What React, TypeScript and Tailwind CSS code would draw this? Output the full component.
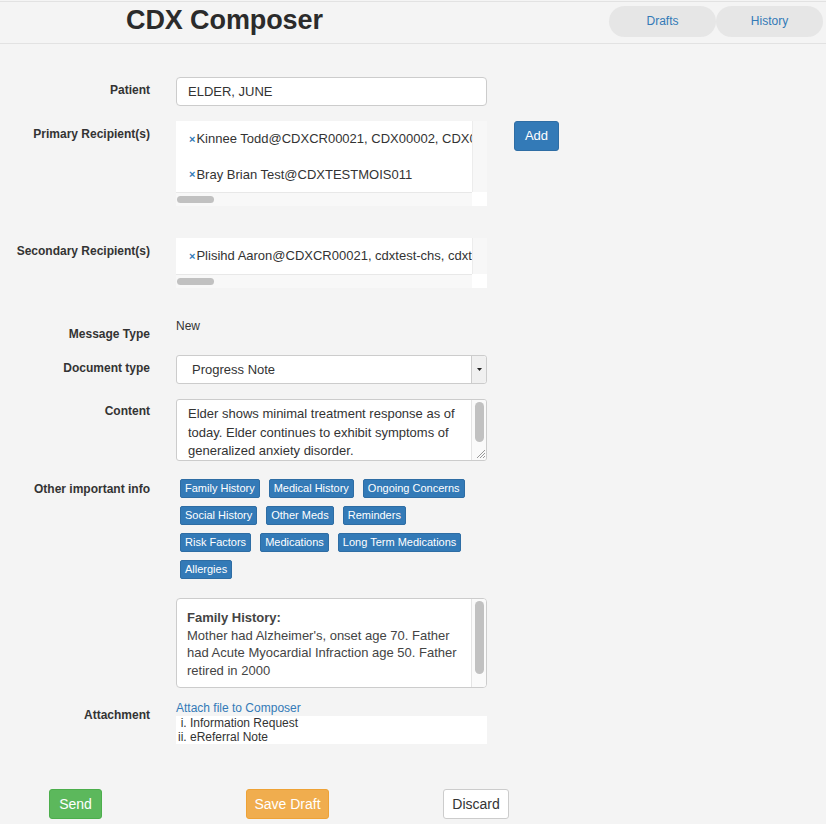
import React from 'react'

const TAG_ROWS = [
  ['Family History', 'Medical History', 'Ongoing Concerns'],
  ['Social History', 'Other Meds', 'Reminders'],
  ['Risk Factors', 'Medications', 'Long Term Medications'],
  ['Allergies'],
]

function Label({ children, pt = 'pt-[6px]' }: { children: React.ReactNode; pt?: string }) {
  return (
    <div className={`w-[150px] shrink-0 text-right text-[12px] leading-[14px] font-bold text-[#333] ${pt}`}>
      {children}
    </div>
  )
}

function Recipient({ text, h }: { text: string; h: string }) {
  return (
    <div className={`flex items-center pl-[13px] whitespace-nowrap text-[13px] text-[#333] ${h}`}>
      <span className="text-[#337ab7] font-bold text-[11px] mr-px">×</span>
      {text}
    </div>
  )
}

function RecipientBox({ items, area }: { items: string[]; area: string }) {
  return (
    <div className="w-[311px] flex flex-col">
      <div className={`flex ${area}`}>
        <div className="w-[296px] bg-white overflow-hidden">
          {items.map((i, idx) => (
            <Recipient key={i} text={i} h={idx === 0 ? 'h-[36px]' : 'h-[35px]'} />
          ))}
        </div>
        <div className="w-[15px] bg-[#f7f7f7] border-l border-[#ececec]" />
      </div>
      <div className="flex h-[14px]">
        <div className="w-[296px] bg-[#f8f8f8] border-t border-[#e8e8e8] pt-[3px] pl-px">
          <div className="h-[7px] w-[37px] rounded-full bg-[#c1c1c1]" />
        </div>
        <div className="w-[15px] bg-white" />
      </div>
    </div>
  )
}

function VScroll({ thumb, grip }: { thumb: string; grip?: boolean }) {
  return (
    <div className="w-[15px] shrink-0 border-l border-[#e4e4e4] bg-[#fafafa] flex flex-col items-center">
      <div className={`mt-[2px] w-[9px] rounded-full bg-[#c1c1c1] ${thumb}`} />
      {grip && (
        <svg className="mt-auto mb-px ml-auto" width="12" height="12" viewBox="0 0 12 12">
          <path d="M11 3 L3 11 M11 6 L6 11 M11 9 L9 11" stroke="#999" strokeWidth="1" />
        </svg>
      )}
    </div>
  )
}

export default function App() {
  return (
    <div className="min-h-[824px] bg-[#f4f4f4] pt-px font-['Liberation_Sans',Arial,sans-serif] text-[#333]">
      <div className="h-[43px] border-t border-b border-[#e2e2e2] flex items-center justify-between">
        <h1 className="pl-[126px] pb-[4px] text-[27px] font-bold text-[#2b2b2b] tracking-[-0.1px]">CDX Composer</h1>
        <div className="flex pr-[3px] pb-[3px]">
          <button className="w-[107px] h-[31px] rounded-full bg-[#e6e6e6] text-[12px] text-[#337ab7]">Drafts</button>
          <button className="w-[107px] h-[31px] rounded-full bg-[#e6e6e6] text-[12px] text-[#337ab7]">History</button>
        </div>
      </div>

      <div className="flex flex-col">
        <div className="flex gap-[26px] mt-[33px]">
          <Label>Patient</Label>
          <div className="w-[311px] h-[29px] bg-white border border-[#ccc] rounded-[4px] pl-[11px] flex items-center text-[13px]">
            ELDER, JUNE
          </div>
        </div>

        <div className="flex gap-[26px] mt-[15px]">
          <Label>Primary Recipient(s)</Label>
          <RecipientBox
            items={['Kinnee Todd@CDXCR00021, CDX00002, CDX00003', 'Bray Brian Test@CDXTESTMOIS011']}
            area="h-[71px]"
          />
          <button className="h-[30px] w-[45px] ml-px bg-[#337ab7] border border-[#2e6da4] rounded-[3px] text-white text-[13px]">
            Add
          </button>
        </div>

        <div className="flex gap-[26px] mt-[32px]">
          <Label>Secondary Recipient(s)</Label>
          <RecipientBox items={['Plisihd Aaron@CDXCR00021, cdxtest-chs, cdxtest-ii']} area="h-[36px]" />
        </div>

        <div className="flex gap-[26px] mt-[33px]">
          <Label>Message Type</Label>
          <div className="-mt-[2px] text-[12px] leading-[14px]">New</div>
        </div>

        <div className="flex gap-[26px] mt-[14px]">
          <Label>Document type</Label>
          <div className="w-[311px] h-[29px] bg-white border border-[#ccc] rounded-[3px] flex text-[13px]">
            <div className="flex-1 pl-[15px] flex items-center">Progress Note</div>
            <div className="w-[15px] border-l border-[#ccc] bg-[#f0f0f0] flex items-center justify-center rounded-r-[3px]">
              <svg width="5" height="3" viewBox="0 0 5 3">
                <path d="M0 0 H5 L2.5 3 Z" fill="#222" />
              </svg>
            </div>
          </div>
        </div>

        <div className="flex gap-[26px] mt-[15px]">
          <Label pt="pt-[5px]">Content</Label>
          <div className="w-[311px] h-[62px] bg-white border border-[#ccc] rounded-[3px] flex overflow-hidden">
            <div className="flex-1 pl-[11px] pr-[8px] pt-[5px] text-[13px] leading-[18.5px] text-[#333]">
              Elder shows minimal treatment response as of today. Elder continues to exhibit symptoms of
              generalized anxiety disorder.
            </div>
            <VScroll thumb="h-[40px]" grip />
          </div>
        </div>

        <div className="flex gap-[26px] mt-[18px]">
          <Label pt="pt-[3px]">Other important info</Label>
          <div className="flex flex-col gap-[8px] pl-[4px]">
            {TAG_ROWS.map((row, i) => (
              <div key={i} className="flex gap-[9px]">
                {row.map(t => (
                  <span
                    key={t}
                    className="h-[19px] px-[4px] flex items-center bg-[#337ab7] border border-[#2e6da4] rounded-[2px] text-white text-[11px]"
                  >
                    {t}
                  </span>
                ))}
              </div>
            ))}
          </div>
        </div>

        <div className="flex gap-[26px] mt-[19px]">
          <div className="w-[150px] shrink-0" />
          <div className="w-[311px] h-[90px] bg-white border border-[#ccc] rounded-[4px] flex overflow-hidden">
            <div className="flex-1 pl-[10px] pr-[8px] pt-[10px] text-[13px] leading-[17.5px] text-[#444]">
              <div className="font-bold">Family History:</div>
              Mother had Alzheimer's, onset age 70. Father had Acute Myocardial Infraction age 50. Father
              retired in 2000
            </div>
            <VScroll thumb="h-[73px]" />
          </div>
        </div>

        <div className="flex gap-[26px] mt-[13px]">
          <Label pt="pt-[7px]">Attachment</Label>
          <div className="w-[311px]">
            <a className="block text-[12px] leading-[14px] text-[#337ab7]">Attach file to Composer</a>
            <ol className="mt-px bg-white list-[lower-roman] pl-[14px] text-[12px] leading-[14px] text-[#333]">
              <li>Information Request</li>
              <li>eReferral Note</li>
            </ol>
          </div>
        </div>

        <div className="flex mt-[45px] pl-[49px]">
          <button className="w-[53px] h-[30px] bg-[#5cb85c] border border-[#4cae4c] rounded-[3px] text-white text-[14px]">
            Send
          </button>
          <button className="ml-[144px] w-[83px] h-[30px] bg-[#f0ad4e] border border-[#eea236] rounded-[3px] text-white text-[14px]">
            Save Draft
          </button>
          <button className="ml-[114px] w-[66px] h-[30px] bg-white border border-[#ccc] rounded-[3px] text-[#333] text-[14px]">
            Discard
          </button>
        </div>
      </div>
    </div>
  )
}
